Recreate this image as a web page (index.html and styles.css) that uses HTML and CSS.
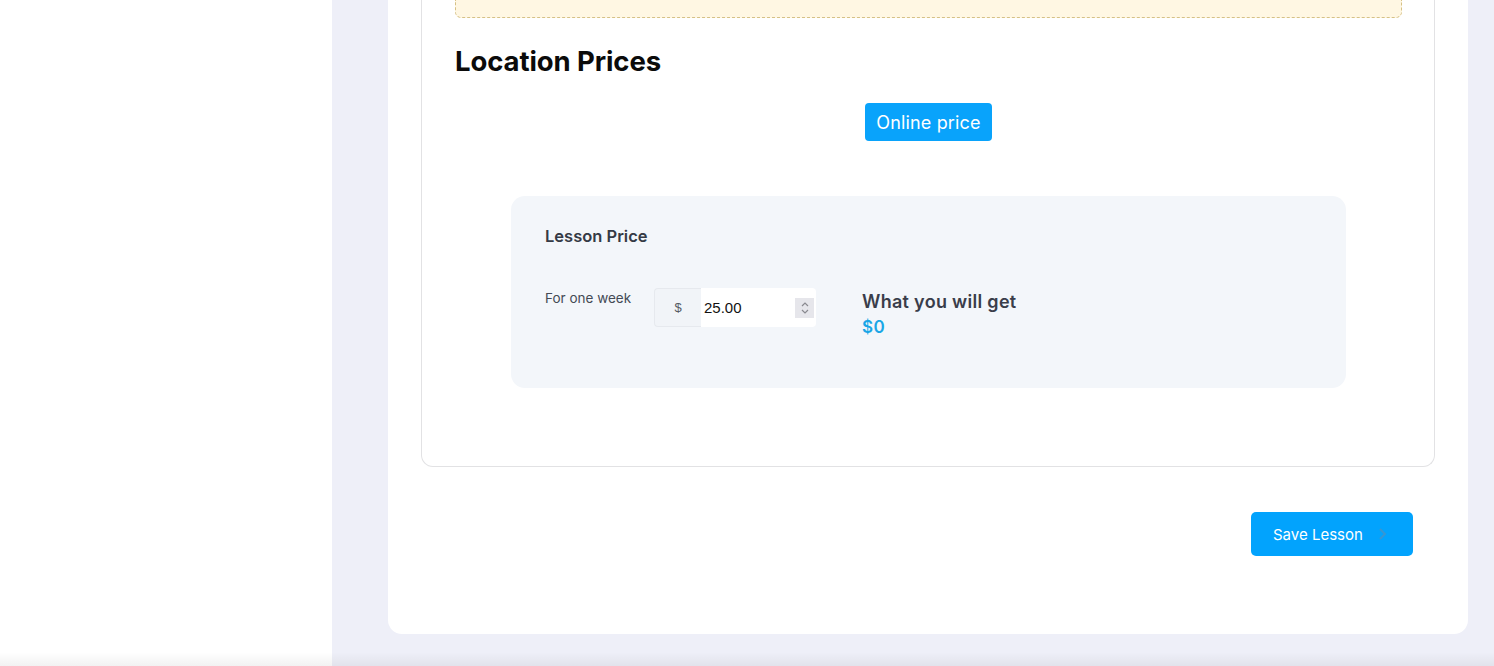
FILE: index.html
```html
<!DOCTYPE html>
<html lang="en">
<head>
<meta charset="utf-8">
<title>Lesson prices</title>
<link rel="stylesheet" href="styles.css">
</head>
<body>
<div class="app">
  <aside class="sidebar"></aside>
  <main class="main">
    <div class="card">
      <section class="panel">
        <div class="notice"></div>
        <h2 class="section-title">Location Prices</h2>
        <div class="tabs">
          <button class="tab">Online price</button>
        </div>
        <div class="price-box">
          <h3 class="price-title">Lesson Price</h3>
          <div class="price-row">
            <label class="price-label">For one week</label>
            <div class="input-group">
              <span class="prepend">$</span>
              <div class="input">
                <span class="value">25.00</span>
                <span class="spinner">
                  <svg width="10" height="16" viewBox="0 0 10 16"><path d="M2 6 L5 3 L8 6" fill="none" stroke="#8a8a90" stroke-width="1.2"/><path d="M2 10 L5 13 L8 10" fill="none" stroke="#8a8a90" stroke-width="1.2"/></svg>
                </span>
              </div>
            </div>
            <div class="result">
              <div class="result-title">What you will get</div>
              <div class="result-value">$0</div>
            </div>
          </div>
        </div>
      </section>
      <div class="actions">
        <button class="save">Save Lesson
          <svg class="chev" width="10" height="14" viewBox="0 0 10 14"><path d="M3 2 L8 7 L3 12" fill="none" stroke="#5a8fb8" stroke-width="2"/></svg>
        </button>
      </div>
    </div>
  </main>
</div>
<div class="bottom-shade"></div>
</body>
</html>
```

FILE: styles.css
```css
html, body {
  margin: 0;
  height: 666px;
  overflow: hidden;
}
body {
  font-family: Inter, "Noto Sans", sans-serif;
  background: #eeeff8;
  position: relative;
}
.app {
  display: flex;
  height: 666px;
}
.sidebar {
  width: 332px;
  flex: none;
  background: #ffffff;
}
.main {
  flex: 1;
  background: #eeeff8;
  padding: 0 26px 0 56px;
}
.card {
  background: #ffffff;
  border-radius: 0 0 14px 14px;
  padding: 0 33px 78px;
}
.panel {
  border: 1px solid #e2e2e4;
  border-top: none;
  border-radius: 0 0 12px 12px;
  padding: 0 32px 78px 33px;
}
.notice {
  height: 17px;
  background: #fff7e3;
  border: 1px dashed #d6c186;
  border-top: none;
  border-radius: 0 0 6px 6px;
}
.section-title {
  margin: 26px 0 0;
  font-family: Inter, sans-serif;
  font-weight: 700;
  font-size: 27.5px;
  line-height: 34px;
  color: #0b0b0b;
  letter-spacing: -0.1px;
}
.tabs {
  display: flex;
  justify-content: center;
  margin-top: 25px;
}
.tab {
  background: #09a3fb;
  color: #ffffff;
  border: none;
  border-radius: 4px;
  height: 38px;
  padding: 0 11px;
  font-family: Inter, sans-serif;
  font-size: 18px;
  letter-spacing: 0.15px;
  font-weight: 400;
}
.price-box {
  width: 835px;
  margin: 55px auto 0;
  background: #f3f6fa;
  border-radius: 14px;
  padding: 29px 34px 61px;
  box-sizing: border-box;
}
.price-title {
  margin: 0;
  font-family: Inter, sans-serif;
  font-weight: 600;
  font-size: 16.5px;
  line-height: 22px;
  color: #353a45;
}
.price-row {
  display: flex;
  align-items: flex-start;
  height: 39px;
  margin-top: 41px;
}
.price-label {
  width: 109px;
  flex: none;
  font-size: 13.5px;
  line-height: 20px;
  color: #444a55;
}
.input-group {
  display: flex;
  width: 162px;
  height: 39px;
  flex: none;
}
.prepend {
  width: 47px;
  box-sizing: border-box;
  display: flex;
  align-items: center;
  justify-content: center;
  background: #f1f4f8;
  border: 1px solid #e6e9ee;
  border-right: none;
  border-radius: 4px 0 0 4px;
  font-family: "Liberation Sans", Arial, sans-serif;
  font-size: 13px;
  color: #555a63;
}
.input {
  flex: 1;
  display: flex;
  align-items: center;
  background: #ffffff;
  border-radius: 0 4px 4px 0;
  padding: 0 2px 0 3px;
}
.value {
  flex: 1;
  font-family: "Liberation Sans", Arial, sans-serif;
  font-size: 15px;
  color: #111111;
}
.spinner {
  width: 19px;
  height: 20px;
  background: #e6e6eb;
  display: flex;
  align-items: center;
  justify-content: center;
}
.result {
  margin-left: 46px;
  padding-top: 2px;
}
.result-title {
  font-weight: 600;
  font-size: 18px;
  letter-spacing: 0.3px;
  line-height: 24px;
  color: #3a3d4a;
}
.result-value {
  font-weight: 600;
  font-size: 17px;
  line-height: 22px;
  letter-spacing: 0.5px;
  color: #1aa6e6;
  margin-top: 2px;
}
.actions {
  display: flex;
  justify-content: flex-end;
  padding-right: 22px;
  margin-top: 45px;
}
.save {
  width: 162px;
  height: 44px;
  background: #02a3fd;
  border: none;
  border-radius: 5px;
  color: #ffffff;
  font-family: Inter, sans-serif;
  font-size: 15px;
  display: flex;
  align-items: center;
  padding: 0 0 0 22px;
  gap: 14px;
}
.chev {
  opacity: 0.6;
}
.bottom-shade {
  position: absolute;
  left: 0;
  right: 0;
  bottom: 0;
  height: 14px;
  background: linear-gradient(to bottom, rgba(0,0,0,0), rgba(0,0,0,0.05));
  pointer-events: none;
}
```
